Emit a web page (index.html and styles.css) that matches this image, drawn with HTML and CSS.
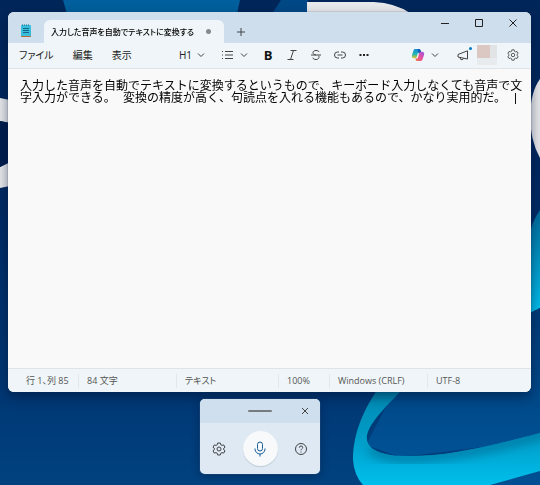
FILE: index.html
```html
<!DOCTYPE html>
<html lang="ja">
<head>
<meta charset="utf-8">
<meta name="viewport" content="width=device-width, initial-scale=1">
<title>メモ帳</title>
<link rel="stylesheet" href="styles.css">
</head>
<body>
<svg class="wallpaper" viewBox="0 0 540 485" preserveAspectRatio="none" aria-hidden="true">
  <defs>
    <linearGradient id="sky" x1="0" y1="0" x2="0" y2="1">
      <stop offset="0" stop-color="#002659"/>
      <stop offset="0.35" stop-color="#002860"/>
      <stop offset="0.78" stop-color="#003672"/>
      <stop offset="1" stop-color="#00427f"/>
    </linearGradient>
    <linearGradient id="ribbon" x1="0" y1="0" x2="0" y2="1">
      <stop offset="0" stop-color="#0086ae"/>
      <stop offset="0.5" stop-color="#0099c4"/>
      <stop offset="1" stop-color="#00bfec"/>
    </linearGradient>
    <linearGradient id="fold" x1="0" y1="0" x2="0" y2="1">
      <stop offset="0" stop-color="#003a75"/>
      <stop offset="1" stop-color="#005295"/>
    </linearGradient>
    <linearGradient id="edge" x1="0" y1="0" x2="0" y2="1">
      <stop offset="0" stop-color="#006a98"/>
      <stop offset="1" stop-color="#00bfec"/>
    </linearGradient>
    <filter id="soft" x="-10%" y="-20%" width="120%" height="140%"><feGaussianBlur stdDeviation="5"/></filter>
    <clipPath id="ribbonClip"><path d="M384 380C362 410 353 435 353 460Q354 475 363 485H490L540 471V433C490 446 450 456 410 456Q385 457 373 449C356 436 376 416 412 380Z"/></clipPath>
  </defs>
  <rect width="540" height="485" fill="url(#sky)"/>
  <path d="M63 0H240L237 14H67Z" fill="#005f9c"/>
  <path d="M281 0H308V14H272Z" fill="#004885"/>
  <path d="M307 2H374Q395 3 410 13H307Z" fill="#e8e9ea"/>
  <path d="M0 98L10 100V123L0 121ZM0 167L10 162V186L0 188Z" fill="#e6e8ea"/>
  <path d="M0 121L10 123V162L0 167Z" fill="#001e4d"/>
  <path d="M540 79Q531 91 530 115Q530 140 540 158Z" fill="#e5e6e8"/>
  <path d="M540 210Q533 220 530 232V313L540 308Z" fill="url(#edge)"/>
  <path d="M530 313L540 308V440L400 457L366 445L400 380H530Z" fill="url(#fold)"/>
  <path d="M490 485L540 471V485Z" fill="#004f92"/>
  <path d="M384 380C362 410 353 435 353 460Q354 475 363 485H490L540 471V433C490 446 450 456 410 456Q385 457 373 449C356 436 376 416 412 380Z" fill="url(#ribbon)"/>
  <g clip-path="url(#ribbonClip)"><path d="M370 448Q385 460 420 458Q480 453 545 433" fill="none" stroke="#006f99" stroke-width="10" opacity="0.7" filter="url(#soft)"/></g>
</svg>

<main class="notepad">
  <header class="titlebar">
    <svg class="app-icon" viewBox="0 0 12 14" aria-hidden="true">
      <rect x="1" y="1" width="10" height="12" rx="1" fill="#38bddd"/>
      <path d="M1 12h10a1 1 0 0 1-1 1H2a1 1 0 0 1-1-1z" fill="#b86a32"/>
      <path d="M2 1h8" stroke="#176a86" stroke-width="1" stroke-dasharray="1 1"/>
      <path d="M3 4.500h6M3 6.500h6M3 8.500h6" stroke="#126887"/>
    </svg>
    <div class="tab"><span class="tab-title">入力した音声を自動でテキストに変換する</span><span class="unsaved"></span></div>
    <button class="new-tab" aria-label="新しいタブ"><svg viewBox="0 0 10 10"><path d="M5 1v8M1 5h8"/></svg></button>
    <div class="window-controls">
      <button aria-label="最小化"><svg viewBox="0 0 10 10"><path d="M1 5.500h8"/></svg></button>
      <button aria-label="最大化"><svg viewBox="0 0 10 10"><path d="M1.500 1.500h7v7h-7z"/></svg></button>
      <button aria-label="閉じる"><svg viewBox="0 0 10 10"><path d="M1.500 1.500l7 7M8.500 1.500l-7 7"/></svg></button>
    </div>
  </header>

  <nav class="toolbar">
    <div class="menus">
      <button>ファイル</button><button>編集</button><button>表示</button>
    </div>
    <div class="format">
      <button class="picker">H1<svg class="chevron" viewBox="0 0 8 8"><path d="M1 2.500l3 3 3-3"/></svg></button>
      <button class="picker" aria-label="リスト"><svg class="wide" viewBox="0 0 12 10"><path d="M3 1.500h8M3 5h8M3 8.500h8M0 1.500h1M0 5h1M0 8.500h1"/></svg><svg class="chevron" viewBox="0 0 8 8"><path d="M1 2.500l3 3 3-3"/></svg></button>
      <button class="tool bold">B</button>
      <button class="tool" aria-label="斜体"><svg viewBox="0 0 12 12"><path d="M4.500 1.500h6M1.500 10.500h6M7.500 1.500l-3 9"/></svg></button>
      <button class="tool" aria-label="取り消し線"><svg viewBox="0 0 12 12"><path d="M9 3C8.500 1.800 7.500 1.500 6 1.500C4.300 1.500 3 2.300 3 3.700C3 5 4.200 5.600 6 6M1 6h10M8.500 6.800C9.800 8.500 8.500 10.500 6 10.500C4.300 10.500 3.200 9.900 2.800 8.700"/></svg></button>
      <button class="tool" aria-label="リンク"><svg viewBox="0 0 12 12"><path d="M5 3H3.500a3 3 0 0 0 0 6H5M7 3h1.500a3 3 0 0 1 0 6H7M3.500 6h5"/></svg></button>
      <button class="tool" aria-label="その他"><svg viewBox="0 0 12 12"><path class="dots" d="M1.500 6h2M5 6h2M8.500 6h2"/></svg></button>
    </div>
    <div class="account">
      <button class="picker" aria-label="Copilot">
        <svg class="copilot" viewBox="0 0 14 14">
          <defs>
            <linearGradient id="cpA" x1="0" y1="0" x2="0" y2="1"><stop offset="0" stop-color="#1688dc"/><stop offset="0.55" stop-color="#23b5b5"/><stop offset="1" stop-color="#e5c82c"/></linearGradient>
            <linearGradient id="cpB" x1="1" y1="0" x2="0" y2="1"><stop offset="0" stop-color="#9a55e8"/><stop offset="0.5" stop-color="#e650a0"/><stop offset="1" stop-color="#f37a3c"/></linearGradient>
          </defs>
          <path d="M9.600 3.500L9.200 2Q8.800 1 8 1H4.200Q3 1 2.500 2.400L1 7Q.3 10.200 3 10.200H4.400Q5.400 10.200 5.700 9.200L7 4.500Q7.300 3.500 8.200 3.500Z" fill="url(#cpA)"/>
          <path d="M4.400 10.500L4.800 12Q5.200 13 6 13H9.800Q11 13 11.500 11.600L13 7Q13.700 3.800 11 3.800H9.600Q8.600 3.800 8.300 4.800L7 9.500Q6.700 10.500 5.800 10.500Z" fill="url(#cpB)"/>
          <path d="M8 1Q8.900 1 9.400 2L10.200 4H9.300Q8.600 4 8.300 5L8 5.800L6.900 4Q7.200 2 6.700 1Z" fill="#1557b5"/>
        </svg>
        <svg class="chevron" viewBox="0 0 8 8"><path d="M1 2.500l3 3 3-3"/></svg>
      </button>
      <button class="tool news" aria-label="お知らせ"><svg viewBox="0 0 12 12"><path d="M1 5.500L10.500 1.800V10L1 8ZM3 8.500Q3.200 11 5 10.800Q6.200 10.600 6.300 9.300"/></svg></button>
      <span class="avatar"></span>
      <button class="tool" aria-label="設定"><svg viewBox="0 0 14 14"><path d="M5.700 1h2.600l.4 1.700 1.300.7 1.700-.5 1.300 2.300-1.300 1.100v1.400l1.300 1.100-1.300 2.300-1.700-.5-1.300.7-.4 1.700H5.700l-.4-1.700-1.300-.7-1.700.5L1 8.800l1.300-1.100V6.300L1 5.200l1.300-2.300 1.700.5 1.300-.7z"/><circle cx="7" cy="7" r="2"/></svg></button>
    </div>
  </nav>

  <section class="editor">
    <textarea aria-label="本文" spellcheck="false">入力した音声を自動でテキストに変換するというもので、キーボード入力しなくても音声で文字入力ができる。 変換の精度が高く、句読点を入れる機能もあるので、かなり実用的だ。 </textarea>
    <span class="caret"></span>
  </section>

  <footer class="statusbar">
    <span>行 1、列 85</span><span>84 文字</span><span>テキスト</span><span>100%</span><span>Windows (CRLF)</span><span>UTF-8</span>
  </footer>
</main>

<aside class="voice">
  <div class="voice-top">
    <span class="grip"></span>
    <button aria-label="閉じる"><svg viewBox="0 0 10 10"><path d="M2 2l6 6M8 2l-6 6"/></svg></button>
  </div>
  <div class="voice-actions">
    <button aria-label="音声入力の設定"><svg viewBox="0 0 14 14"><path d="M5.700 1h2.600l.4 1.700 1.300.7 1.700-.5 1.300 2.300-1.300 1.100v1.400l1.300 1.100-1.300 2.300-1.700-.5-1.300.7-.4 1.700H5.700l-.4-1.700-1.300-.7-1.700.5L1 8.800l1.300-1.100V6.300L1 5.200l1.300-2.300 1.700.5 1.300-.7z"/><circle cx="7" cy="7" r="2"/></svg></button>
    <button class="mic" aria-label="音声入力"><svg viewBox="0 0 12 16"><rect x="3.500" y="1" width="5" height="9" rx="2.500"/><path d="M1 7.500v.5a5 5 0 0 0 10 0v-.5M6 13v2.500"/></svg></button>
    <button aria-label="ヘルプ"><svg viewBox="0 0 14 14"><circle cx="7" cy="7" r="5.500"/><path d="M5.300 5.700Q5.300 4 7 4Q8.700 4 8.700 5.500Q8.700 6.300 7.800 6.900Q7 7.400 7 8.300M7 9.500v1"/></svg></button>
  </div>
</aside>
</body>
</html>
```
FILE: styles.css
```css
* {
  box-sizing: border-box;
}

body {
  display: flex;
  flex-direction: column;
  gap: 7px;
  min-height: 100vh;
  margin: 0;
  padding: 12px 9px 11px 8px;
  background: #002b62;
  color: #222;
  font: 10px/14px "Open Sans", "Noto Sans CJK JP", sans-serif;
  font-feature-settings: "palt";
}

button {
  display: flex;
  align-items: center;
  justify-content: center;
  padding: 0;
  border: 0;
  background: none;
  color: inherit;
  font: inherit;
  font-feature-settings: inherit;
}

svg {
  flex: none;
  fill: none;
  stroke: #444;
  stroke-width: 1;
}

.wallpaper {
  position: fixed;
  inset: 0;
  z-index: -1;
  width: 100%;
  height: 100%;
  stroke: none;
}

.notepad {
  display: flex;
  flex: 1;
  flex-direction: column;
  overflow: hidden;
  border-radius: 6px;
  background: #f9f9f9;
  box-shadow: 0 0 1px #1b3550, 0 5px 12px rgb(0 15 50 / 50%);
}

.titlebar {
  display: flex;
  align-items: flex-end;
  height: 31px;
  padding-left: 12px;
  background: #cedeec;
}

.app-icon {
  width: 12px;
  height: 14px;
  margin: 0 12px 5px 0;
  stroke: none;
}

.tab {
  display: flex;
  align-items: center;
  justify-content: space-between;
  width: 180px;
  height: 23px;
  padding: 0 13px 0 7px;
  border-radius: 6px 6px 0 0;
  background: #eff5f8;
}

.tab-title {
  width: 146px;
  overflow: hidden;
  color: #000;
  font-size: 8px;
  font-weight: 500;
  white-space: nowrap;
}

.unsaved {
  width: 5px;
  height: 5px;
  border-radius: 50%;
  background: #858a8e;
}

.new-tab {
  width: 34px;
  height: 23px;
}

.new-tab svg,
.window-controls svg,
.voice-top svg {
  width: 10px;
  height: 10px;
}

.window-controls {
  display: flex;
  align-self: flex-start;
  margin-left: auto;
  padding-right: 1px;
}

.window-controls button {
  width: 34px;
  height: 22px;
}

.window-controls svg {
  stroke: #222;
}

.toolbar {
  display: flex;
  align-items: center;
  height: 26px;
  padding: 0 6px 1px 11px;
  border-bottom: 1px solid #dfe4e8;
  background: #eff5f8;
}

.menus {
  display: flex;
  gap: 19px;
  width: 160px;
}

.format,
.account {
  display: flex;
  align-items: center;
}

.picker {
  justify-content: space-between;
  width: 26px;
  margin-right: 17px;
}

.picker + .picker {
  margin-right: 8px;
}

.chevron {
  width: 8px;
  height: 8px;
}

.wide {
  width: 12px;
  height: 10px;
}

.tool {
  width: 24px;
  height: 24px;
}

.tool svg {
  width: 12px;
  height: 12px;
}

.bold {
  color: #111;
  font-size: 13px;
  font-weight: 700;
}

.dots {
  stroke: #222;
  stroke-width: 2;
}

.account {
  margin-left: auto;
}

.account .picker {
  width: 28px;
  margin-right: 12px;
}

.copilot {
  width: 14px;
  height: 14px;
  stroke: none;
}

.news {
  position: relative;
}

.news::after {
  position: absolute;
  top: 4px;
  right: 3px;
  width: 3px;
  height: 3px;
  border-radius: 50%;
  background: #0078c4;
  content: "";
}

.avatar {
  width: 20px;
  height: 20px;
  margin: 0 4px 0 2px;
  background: linear-gradient(#dcc8c2, #dcc8c2) 0 0 / 13px 13px no-repeat, linear-gradient(#e1e3e5 13px, #e8ebee 13px);
}

.editor {
  position: relative;
  display: flex;
  flex: 1;
}

textarea {
  flex: 1;
  min-height: 120px;
  padding: 12px 4px 12px 12px;
  overflow: hidden;
  border: 0;
  outline: 0;
  resize: none;
  background: none;
  color: #000;
  font: 12px/12px "Liberation Mono", "Noto Sans CJK JP", monospace;
}

.caret {
  position: absolute;
  top: 24px;
  right: 15px;
  width: 1px;
  height: 11px;
  background: #111;
}

.statusbar {
  display: grid;
  grid-template-columns: 61px 98px 102px 51px 98px 1fr;
  align-items: center;
  height: 24px;
  padding-left: 10px;
  border-top: 1px solid #dfe4e8;
  background: #eff5f8;
  color: #555;
  font-size: 9px;
}

.statusbar span {
  padding-left: 8px;
  border-right: 1px solid #e2e7ea;
}

.statusbar span:last-child {
  border: 0;
}

.voice {
  width: 120px;
  margin-left: 192px;
  overflow: hidden;
  border-radius: 5px;
  background: #dee9f4;
  box-shadow: 0 0 1px #8ca6bd, 0 2px 8px rgb(0 15 50 / 40%);
}

.voice-top {
  display: grid;
  grid-template-columns: 1fr 24px 1fr;
  align-items: center;
  height: 24px;
  background: #cfdfed;
}

.grip {
  grid-column: 2;
  height: 2px;
  border-radius: 1px;
  background: #777c80;
}

.voice-top button {
  width: 24px;
  height: 22px;
  margin-left: 21px;
}

.voice-actions {
  display: flex;
  align-items: center;
  justify-content: space-between;
  height: 51px;
  padding: 0 12px;
}

.voice-actions svg {
  width: 14px;
  height: 14px;
}

.mic {
  width: 35px;
  height: 35px;
  border-radius: 50%;
  background: #f7f9fa;
  box-shadow: 0 1px 1px #bdc9d3;
}

.voice-actions .mic svg {
  width: 12px;
  height: 16px;
  stroke: #145b98;
}
```
